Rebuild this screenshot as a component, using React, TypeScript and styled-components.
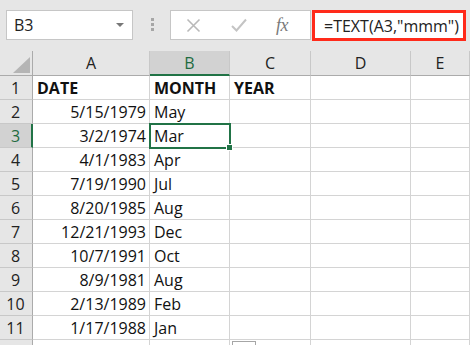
import React from "react";
import styled, { createGlobalStyle, css } from "styled-components";

const Global = createGlobalStyle`
  html, body { margin: 0; padding: 0; background: #ffffff; overflow: hidden; }
  body { font-family: "Open Sans", "Liberation Sans", sans-serif; }
`;

const Page = styled.div`
  width: 470px;
  height: 345px;
  overflow: hidden;
  position: relative;
  background: #ffffff;
`;

const Toolbar = styled.div`
  height: 51px;
  box-sizing: border-box;
  background: #e6e6e6;
  display: flex;
  align-items: flex-start;
  padding: 10px 0 0 6px;
`;

const NameBox = styled.div`
  width: 127px;
  height: 30px;
  box-sizing: border-box;
  background: #fff;
  border: 1px solid #c6c6c6;
  display: flex;
  align-items: center;
  justify-content: space-between;
  padding: 0 8px 0 7px;
  font-size: 16px;
  color: #222;
`;

const Caret = styled.span`
  width: 0;
  height: 0;
  border-left: 4px solid transparent;
  border-right: 4px solid transparent;
  border-top: 4px solid #777;
`;

const Grip = styled.div`
  width: 3px;
  margin: 8px 16px 0 18px;
  display: flex;
  flex-direction: column;
  gap: 2px;
  & > span { display: block; width: 3px; height: 3px; background: #a6a6a6; }
`;

const IconBox = styled.div`
  width: 141px;
  height: 30px;
  box-sizing: border-box;
  background: #fff;
  border: 1px solid #c6c6c6;
  display: flex;
  align-items: center;
  padding-left: 15px;
`;

const IconSlot = styled.span<{ $w: number }>`
  width: ${(p) => p.$w}px;
  display: flex;
  align-items: center;
`;

const Fx = styled.span`
  font-family: "Liberation Serif", "DejaVu Serif", serif;
  font-style: italic;
  font-size: 18px;
  color: #7a7a7a;
  letter-spacing: -0.5px;
`;

const FormulaInput = styled.div`
  margin-left: 1px;
  width: 154px;
  height: 31px;
  box-sizing: border-box;
  background: #fff;
  border: 3px solid #ff2a1a;
  display: flex;
  align-items: center;
  padding-left: 9px;
  font-size: 16px;
  color: #222;
  white-space: nowrap;
`;

const COLS = "33px 117px 80px 81px 100px 59px";

const Sheet = styled.div`
  display: grid;
  grid-template-columns: ${COLS};
  grid-template-rows: 25px repeat(12, 24px);
`;

const Corner = styled.div`
  background: #e6e6e6;
  border-right: 1px solid #ababab;
  border-bottom: 1px solid #ababab;
  box-sizing: border-box;
  display: flex;
  align-items: flex-end;
  justify-content: flex-end;
  padding: 0 2px 2px 0;
`;

const ColHead = styled.div<{ $sel?: boolean }>`
  box-sizing: border-box;
  background: ${(p) => (p.$sel ? "#d2d2d2" : "#e6e6e6")};
  border-right: 1px solid #c8c8c8;
  border-bottom: ${(p) => (p.$sel ? "2px solid #217346" : "1px solid #ababab")};
  display: flex;
  align-items: center;
  justify-content: center;
  padding-top: ${(p) => (p.$sel ? "1px" : "0")};
  font-size: 16px;
  color: ${(p) => (p.$sel ? "#1e6b40" : "#222")};
`;

const RowHead = styled.div<{ $sel?: boolean }>`
  box-sizing: border-box;
  background: ${(p) => (p.$sel ? "#d2d2d2" : "#e6e6e6")};
  border-right: ${(p) => (p.$sel ? "2px solid #217346" : "1px solid #ababab")};
  border-bottom: 1px solid #c8c8c8;
  display: flex;
  align-items: flex-end;
  justify-content: center;
  padding: 0 ${(p) => (p.$sel ? "0" : "1px")} 0 0;
  font-size: 16px;
  color: ${(p) => (p.$sel ? "#1e6b40" : "#222")};
`;

const Cell = styled.div<{ $align?: "left" | "right"; $bold?: boolean; $sel?: boolean }>`
  box-sizing: border-box;
  position: relative;
  border-right: 1px solid #d4d4d4;
  border-bottom: 1px solid #d4d4d4;
  display: flex;
  align-items: flex-end;
  justify-content: ${(p) => (p.$align === "right" ? "flex-end" : "flex-start")};
  padding: 0 3px 0 4px;
  font-size: 16px;
  font-weight: ${(p) => (p.$bold ? 700 : 400)};
  color: #111;
  white-space: nowrap;
  ${(p) =>
    p.$sel &&
    css`
      outline: 2px solid #217346;
      outline-offset: -1px;
      z-index: 1;
    `}
`;

const Handle = styled.span`
  position: absolute;
  right: -4px;
  bottom: -4px;
  width: 5px;
  height: 5px;
  background: #217346;
  border: 1px solid #fff;
`;

const PasteTab = styled.div`
  position: absolute;
  left: 232px;
  top: 341px;
  width: 24px;
  height: 10px;
  box-sizing: border-box;
  border: 1px solid #a6a6a6;
  background: #fff;
`;

const rows: [string, string, string][] = [
  ["DATE", "MONTH", "YEAR"],
  ["5/15/1979", "May", ""],
  ["3/2/1974", "Mar", ""],
  ["4/1/1983", "Apr", ""],
  ["7/19/1990", "Jul", ""],
  ["8/20/1985", "Aug", ""],
  ["12/21/1993", "Dec", ""],
  ["10/7/1991", "Oct", ""],
  ["8/9/1981", "Aug", ""],
  ["2/13/1989", "Feb", ""],
  ["1/17/1988", "Jan", ""],
  ["", "", ""],
];

export default function App() {
  return (
    <Page>
      <Global />
      <Toolbar>
        <NameBox>
          <span>B3</span>
          <Caret />
        </NameBox>
        <Grip>
          <span />
          <span />
          <span />
        </Grip>
        <IconBox>
          <IconSlot $w={45}>
            <svg width="15" height="15" viewBox="0 0 15 15">
              <path d="M1.5 1.5 L13.5 13.5 M13.5 1.5 L1.5 13.5" stroke="#b9b9b9" strokeWidth="1.6" fill="none" />
            </svg>
          </IconSlot>
          <IconSlot $w={45}>
            <svg width="16" height="14" viewBox="0 0 16 14">
              <path d="M1 8 L5.5 12.5 L15 1.5" stroke="#c4c4c4" strokeWidth="2" fill="none" />
            </svg>
          </IconSlot>
          <Fx>fx</Fx>
        </IconBox>
        <FormulaInput>=TEXT(A3,"mmm")</FormulaInput>
      </Toolbar>
      <Sheet>
        <Corner>
          <svg width="17" height="16" viewBox="0 0 17 16">
            <polygon points="17,0 17,16 0,16" fill="#b5b5b5" />
          </svg>
        </Corner>
        {["A", "B", "C", "D", "E"].map((c) => (
          <ColHead key={c} $sel={c === "B"}>
            {c}
          </ColHead>
        ))}
        {rows.map((r, i) => (
          <React.Fragment key={i}>
            <RowHead $sel={i === 2}>{i < 11 ? i + 1 : ""}</RowHead>
            <Cell $align={i === 0 ? "left" : "right"} $bold={i === 0}>
              {r[0]}
            </Cell>
            <Cell $bold={i === 0} $sel={i === 2}>
              {r[1]}
              {i === 2 && <Handle />}
            </Cell>
            <Cell $bold={i === 0}>{r[2]}</Cell>
            <Cell />
            <Cell />
          </React.Fragment>
        ))}
      </Sheet>
      <PasteTab />
    </Page>
  );
}
